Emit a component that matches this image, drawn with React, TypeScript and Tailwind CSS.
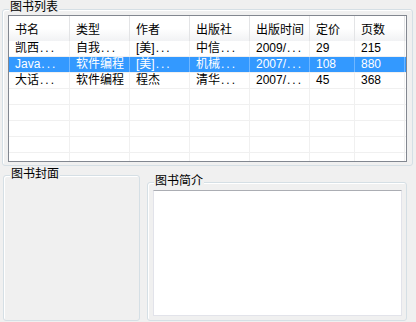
import type { ReactNode } from "react"

const columns = [
  { label: "书名", width: "w-[61px]" },
  { label: "类型", width: "w-[60px]" },
  { label: "作者", width: "w-[60px]" },
  { label: "出版社", width: "w-[60px]" },
  { label: "出版时间", width: "w-[60px]" },
  { label: "定价", width: "w-[45px]" },
  { label: "页数", width: "w-[50px]" },
]

const books = [
  ["凯西...", "自我...", "[美]...", "中信...", "2009/...", "29", "215"],
  ["Java...", "软件编程", "[美]...", "机械...", "2007/...", "108", "880"],
  ["大话...", "软件编程", "程杰", "清华...", "2007/...", "45", "368"],
]

const selectedRow = 1

function GroupTitle({ children, className }: { children: ReactNode; className: string }) {
  return (
    <span className={`absolute bg-[#f0f0f0] px-[1px] text-[12px] leading-[14px] text-black ${className}`}>
      {children}
    </span>
  )
}

// truncated cells end in "...", drawn with the wide dots of the old list view
function CellText({ text }: { text: string }) {
  if (!text.endsWith("...")) return <>{text}</>
  return (
    <>
      {text.slice(0, -3)}
      <span className="pl-[1px] tracking-[2px]">...</span>
    </>
  )
}

export default function App() {
  const emptyRows = Array.from({ length: 5 })

  return (
    <div
      className="flex h-[322px] w-[416px] flex-col overflow-hidden bg-[#f0f0f0] text-[12px] text-black"
      style={{ fontFamily: '"Liberation Sans", "Noto Sans CJK SC", sans-serif' }}
    >
      {/* 图书列表 */}
      <div className="relative ml-[2px] mt-[9px] h-[157px] w-[411px] rounded-[3px] border border-[#d5dfe5] p-[5px] shadow-[inset_1px_1px_0_#fff]">
        <GroupTitle className="left-[6px] top-[-10px]">图书列表</GroupTitle>
        <div className="flex h-[147px] w-[399px] flex-col overflow-hidden border border-[#828790] bg-white">
          <div className="flex h-[25px] shrink-0 bg-gradient-to-b from-white from-50% to-[#f1f2f4]">
            {columns.map((col) => (
              <div
                key={col.label}
                className={`${col.width} flex shrink-0 items-center border-r border-[#e3e4e6] pl-[6px] pt-[2px]`}
              >
                {col.label}
              </div>
            ))}
          </div>
          {books.map((row, i) => (
            <div
              key={i}
              className={`flex h-[16px] shrink-0 border-b border-[#f0f0f0] ${
                i === selectedRow ? "bg-[#3399ff] text-white" : ""
              }`}
            >
              {row.map((cell, j) => (
                <div
                  key={j}
                  className={`${columns[j].width} flex shrink-0 items-center overflow-hidden whitespace-nowrap border-r pl-[6px] leading-[15px] ${
                    i === selectedRow ? "border-[#6fb6ff]" : "border-[#f0f0f0]"
                  }`}
                >
                  <CellText text={cell} />
                </div>
              ))}
            </div>
          ))}
          {emptyRows.map((_, i) => (
            <div key={i} className="flex h-[16px] shrink-0 border-b border-[#f0f0f0]">
              {columns.map((col) => (
                <div key={col.label} className={`${col.width} shrink-0 border-r border-[#f0f0f0]`} />
              ))}
            </div>
          ))}
        </div>
      </div>

      <div className="flex">
        {/* 图书封面 */}
        <div className="relative ml-[3px] mt-[9px] h-[146px] w-[137px] rounded-[3px] border border-[#d5dfe5] shadow-[inset_1px_1px_0_#fff]">
          <GroupTitle className="left-[6px] top-[-9px]">图书封面</GroupTitle>
        </div>

        {/* 图书简介 */}
        <div className="relative ml-[7px] mt-[16px] h-[139px] w-[260px] rounded-[3px] border border-[#d5dfe5] pl-[5px] pt-[7px] shadow-[inset_1px_1px_0_#fff]">
          <GroupTitle className="left-[6px] top-[-9px]">图书简介</GroupTitle>
          <div className="h-[126px] w-[249px] border border-[#e2e3ea] border-t-[#abadb3] bg-white" />
        </div>
      </div>
    </div>
  )
}
